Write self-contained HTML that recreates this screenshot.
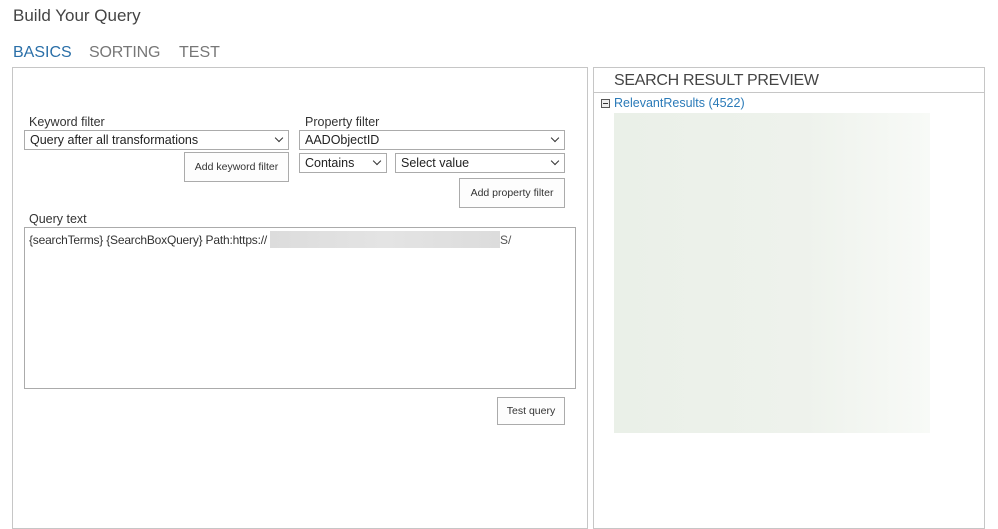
<!DOCTYPE html><html><head><style>
body{margin:0;width:998px;height:494px;background:#fff;font-family:"Liberation Sans",sans-serif;color:#444;position:relative;overflow:hidden}
.a{position:absolute}
.sel{position:absolute;border:1px solid #ababab;background:#fff;font-size:12.5px;color:#222;box-sizing:border-box;padding:2px 5px;height:20px;line-height:14px}
.sel:after{content:"";position:absolute;right:6px;top:4px;width:5px;height:5px;border-right:1.5px solid #333;border-bottom:1.5px solid #333;transform:rotate(45deg)}
.btn{position:absolute;border:1px solid #ababab;background:#fdfdfd;font-size:10.5px;color:#333;box-sizing:border-box;display:flex;align-items:center;justify-content:center}
.lbl{position:absolute;font-size:12.5px;color:#333}
</style></head><body>
<div class="a" style="left:13px;top:6px;font-size:17px;color:#444">Build Your Query</div>
<div class="a" style="left:13px;top:44px;font-size:16px;color:#2a6fa8">BASICS</div>
<div class="a" style="left:89px;top:44px;font-size:16px;color:#777;letter-spacing:-0.2px">SORTING</div>
<div class="a" style="left:179px;top:44px;font-size:16px;color:#777">TEST</div>
<div class="a" style="left:12px;top:67px;width:574px;height:460px;border:1px solid #c6c6c6"></div>
<div class="lbl" style="left:29px;top:115px">Keyword filter</div>
<div class="sel" style="left:24px;top:130px;width:265px">Query after all transformations</div>
<div class="btn" style="left:184px;top:152px;width:105px;height:30px">Add keyword filter</div>
<div class="lbl" style="left:305px;top:115px">Property filter</div>
<div class="sel" style="left:299px;top:130px;width:266px">AADObjectID</div>
<div class="sel" style="left:299px;top:153px;width:88px">Contains</div>
<div class="sel" style="left:395px;top:153px;width:170px">Select value</div>
<div class="btn" style="left:459px;top:178px;width:106px;height:30px">Add property filter</div>
<div class="lbl" style="left:29px;top:212px">Query text</div>
<div class="a" style="left:24px;top:227px;width:552px;height:162px;border:1px solid #ababab;box-sizing:border-box"></div>
<div class="a" style="left:29px;top:233px;font-size:12px;color:#333;letter-spacing:-0.2px">{searchTerms} {SearchBoxQuery} Path:https://</div>
<div class="a" style="left:270px;top:231px;width:230px;height:17px;background:linear-gradient(90deg,#dcdcdc,#e4e4e4,#dcdcdc)"></div>
<div class="a" style="left:500px;top:233px;font-size:12px;color:#555">S/</div>
<div class="btn" style="left:497px;top:397px;width:68px;height:28px">Test query</div>
<div class="a" style="left:593px;top:67px;width:390px;height:460px;border:1px solid #c6c6c6"></div>
<div class="a" style="left:594px;top:92px;width:390px;height:1px;background:#c6c6c6"></div>
<div class="a" style="left:614px;top:72px;font-size:16px;color:#444;letter-spacing:-0.3px">SEARCH RESULT PREVIEW</div>
<div class="a" style="left:601px;top:99px;width:7px;height:7px;border:1px solid #555;background:#eee"><div style="margin:3px 1px;height:1px;background:#333"></div></div>
<div class="a" style="left:614px;top:96px;font-size:12.5px;color:#2a7ab8">RelevantResults (4522)</div>
<div class="a" style="left:614px;top:113px;width:316px;height:320px;background:linear-gradient(90deg,#eaf0e8,#eef2ec 60%,#f8faf7)"></div>
</body></html>
